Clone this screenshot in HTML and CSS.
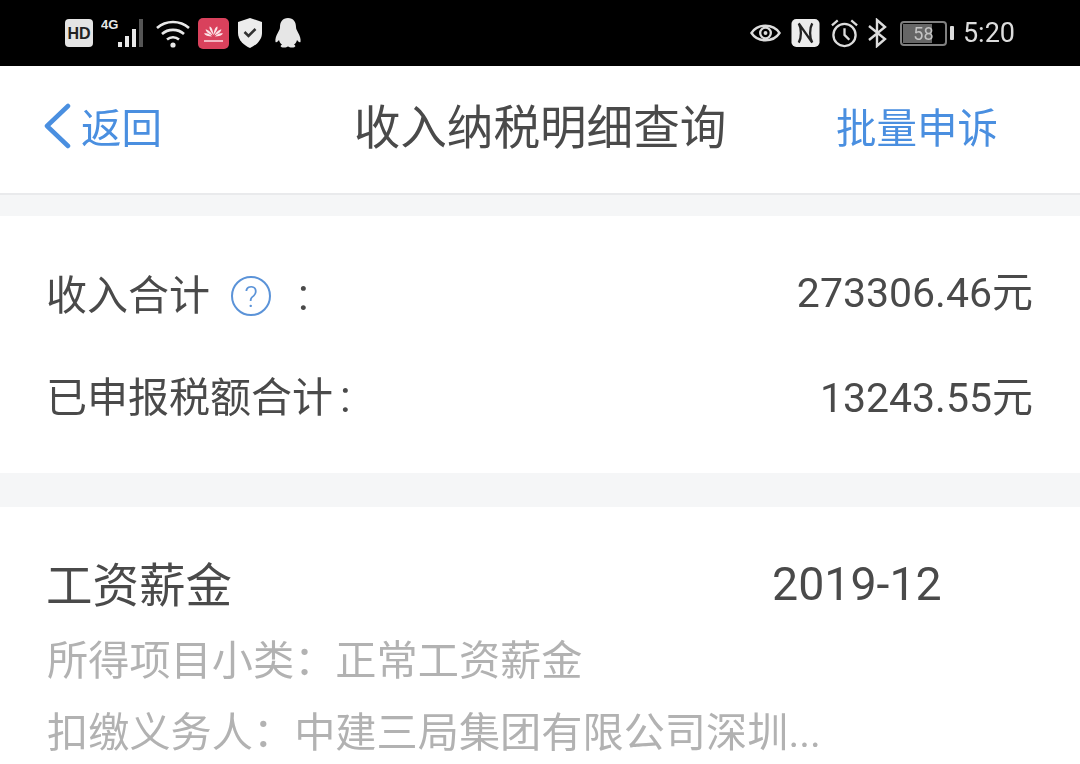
FILE: index.html
```html
<!DOCTYPE html>
<html lang="zh-CN">
<head>
  <meta charset="UTF-8">
  <title>收入纳税明细查询</title>
  <link rel="stylesheet" href="styles.css">
</head>
<body>
  <div class="status-bar">
    <div class="status-left">
      <svg class="ico-hd" width="28" height="28" viewBox="0 0 28 28"><rect width="28" height="28" x="0" y="0" rx="4" fill="#e4e4e4"/><text x="14" y="19.5" class="hd-text">HD</text></svg>
      <svg class="ico-signal" width="48" height="32" viewBox="0 0 48 32">
        <text x="0" y="12" class="g4-text">4G</text>
        <rect x="17" y="25" width="4" height="5" fill="#e8e8e8"/>
        <rect x="24" y="19" width="4" height="11" fill="#e8e8e8"/>
        <rect x="31" y="12" width="4" height="18" fill="#e8e8e8"/>
        <rect x="38" y="2" width="4" height="28" fill="#555"/>
      </svg>
      <svg class="ico-wifi" width="36" height="32" viewBox="0 0 36 32" fill="none" stroke="#e8e8e8" stroke-width="2.6">
        <path d="M2 11C11 3 25 3 34 11"/>
        <path d="M7 17C13 11.5 23 11.5 29 17"/>
        <path d="M12 22.5C15.5 19.5 20.5 19.5 24 22.5"/>
        <circle cx="18" cy="28" r="2.6" fill="#e8e8e8" stroke="none"/>
      </svg>
      <svg class="ico-huawei" width="31" height="31" viewBox="0 0 31 31">
        <rect width="31" height="31" rx="5" fill="#d9415c"/>
        <path d="M15.5 17C13 14 11 11 11.5 8.5C13.5 9 15 12 15.5 17ZM15.5 17C18 14 20 11 19.5 8.5C17.5 9 16 12 15.5 17ZM14.5 17.5C11 16 8 14 7.5 11.5C10 11.5 13 14 14.5 17.5ZM16.5 17.5C20 16 23 14 23.5 11.5C21 11.5 18 14 16.5 17.5ZM14 18.5C10 18.5 7 17.5 6 15.5C9 14.5 12 16 14 18.5ZM17 18.5C21 18.5 24 17.5 25 15.5C22 14.5 19 16 17 18.5Z" fill="#fbe4e8"/>
        <rect x="6" y="22" width="19" height="2" fill="#f3b6c2"/>
      </svg>
      <svg class="ico-shield" width="26" height="32" viewBox="0 0 26 32">
        <path d="M13 1L25 5V16C25 23 19 28.5 13 31C7 28.5 1 23 1 16V5Z" fill="#ececec"/>
        <path d="M7.5 15L11.5 19L18.5 12" fill="none" stroke="#333" stroke-width="2.5"/>
      </svg>
      <svg class="ico-qq" width="28" height="30" viewBox="0 0 28 30">
        <path d="M14 0C8.5 0 6 4 6 9C6 11 5 12.5 4 14.5C2 18 1 21 1.5 24C2.5 25 4 23.5 5 22C5.5 24 6.5 25.5 8 26.5C6 27.5 6 29.5 10 29.5C12 29.5 13 29 14 28.5C15 29 16 29.5 18 29.5C22 29.5 22 27.5 20 26.5C21.5 25.5 22.5 24 23 22C24 23.5 25.5 25 26.5 24C27 21 26 18 24 14.5C23 12.5 22 11 22 9C22 4 19.5 0 14 0Z" fill="#e6e6e6"/>
      </svg>
    </div>
    <div class="status-right">
      <svg class="ico-eye" width="31" height="24" viewBox="0 0 32 24" fill="none" stroke="#dcdcdc" stroke-width="2.4">
        <path d="M1.5 12C8 2 24 2 30.5 12C24 22 8 22 1.5 12Z"/>
        <circle cx="16" cy="12" r="5.5"/>
        <circle cx="16" cy="12" r="2" fill="#dcdcdc" stroke="none"/>
      </svg>
      <svg class="ico-nfc" width="29" height="30" viewBox="0 0 30 30">
        <rect width="29" height="29" x="0.5" y="0.5" rx="5" fill="#ececec"/>
        <path d="M8 5C11 10 11 20 8 25M22 5C19 10 19 20 22 25M8 5L22 25" fill="none" stroke="#222" stroke-width="2.4"/>
      </svg>
      <svg class="ico-alarm" width="29" height="30" viewBox="0 0 30 30" fill="none" stroke="#dcdcdc" stroke-width="2.4">
        <circle cx="15" cy="17" r="11.5"/>
        <path d="M15 10V17L20 22"/>
        <path d="M2 7L8 2M28 7L22 2"/>
      </svg>
      <svg class="ico-bt" width="20" height="30" viewBox="0 0 20 30" fill="none" stroke="#dcdcdc" stroke-width="2.4">
        <path d="M2 8L18 21L10 28V2L18 9L2 22"/>
      </svg>
      <div class="battery">
        <div class="battery-fill"></div>
        <span class="battery-num">58</span>
      </div>
      <div class="battery-tip"></div>
      <span class="clock">5:20</span>
    </div>
  </div>

  <div class="nav-bar">
    <div class="nav-back">
      <svg width="30" height="46" viewBox="0 0 30 46" fill="none" stroke="#4a8fe0" stroke-width="4.5" stroke-linecap="round" stroke-linejoin="round">
        <path d="M25 3L4 23L25 43"/>
      </svg>
      <span>返回</span>
    </div>
    <div class="nav-title">收入纳税明细查询</div>
    <div class="nav-action">批量申诉</div>
  </div>

  <div class="gap gap-top"></div>

  <div class="summary">
    <div class="summary-row">
      <div class="summary-label">
        <span>收入合计</span>
        <span class="help">?</span>
        <span class="colon colon-first">:</span>
      </div>
      <div class="summary-value value-one">273306.46元</div>
    </div>
    <div class="summary-row">
      <div class="summary-label">
        <span>已申报税额合计</span>
        <span class="colon colon-second">:</span>
      </div>
      <div class="summary-value">13243.55元</div>
    </div>
  </div>

  <div class="gap gap-mid"></div>

  <div class="record">
    <div class="record-head">
      <div class="record-title">工资薪金</div>
      <div class="record-date">2019-12</div>
    </div>
    <div class="record-line">所得项目小类&#xFF1A;正常工资薪金</div>
    <div class="record-line">扣缴义务人&#xFF1A;中建三局集团有限公司深圳...</div>
  </div>
</body>
</html>
```

FILE: styles.css
```css
:root {
  --text: #4a4a4a;
  --blue: #4a8fe0;
  --muted: #b2b2b2;
  --gap: #f5f6f7;
}

html, body {
  margin: 0;
  height: 764px;
  overflow: hidden;
}

body {
  font-family: "Roboto", "Noto Sans CJK SC", sans-serif;
  background: #fff;
  color: var(--text);
  filter: blur(0.4px);
}

.status-bar {
  height: 66px;
  background: #000;
  display: flex;
  justify-content: space-between;
  align-items: center;
  padding: 0 65px;
  box-sizing: border-box;
}

.status-left, .status-right {
  display: flex;
  align-items: center;
}

.status-left svg, .status-right svg {
  display: block;
}

.ico-hd {
  margin-right: 8px;
}

.hd-text {
  font-family: "Liberation Sans", sans-serif;
  font-size: 16px;
  font-weight: bold;
  text-anchor: middle;
  fill: #222;
}

.g4-text {
  font-family: "Liberation Sans", sans-serif;
  font-size: 13px;
  font-weight: bold;
  fill: #e8e8e8;
}

.ico-wifi {
  margin-left: 6px;
}

.ico-huawei {
  margin-left: 7px;
}

.ico-shield {
  margin-left: 8px;
}

.ico-qq {
  margin-left: 11px;
}

.status-right {
  color: #dcdcdc;
}

.ico-eye, .ico-nfc {
  margin-right: 10px;
}

.ico-alarm {
  margin-right: 8px;
}

.ico-bt {
  margin-right: 13px;
}

.battery {
  width: 47px;
  height: 25px;
  border: 2px solid #808080;
  border-radius: 4px;
  box-sizing: border-box;
  position: relative;
  display: flex;
  align-items: center;
  justify-content: center;
}

.battery-fill {
  position: absolute;
  left: 1px;
  top: 1px;
  bottom: 1px;
  width: 29px;
  background: #666;
}

.battery-num {
  position: relative;
  font-size: 18px;
  color: #c4c4c4;
}

.battery-tip {
  width: 4px;
  height: 14px;
  margin-left: 3px;
  background: #dcdcdc;
  border-radius: 1px;
}

.clock {
  font-size: 27px;
  margin-left: 9px;
}

.nav-bar {
  height: 119px;
  padding: 0 82px 8px;
  border-bottom: 2px solid #e9eaec;
  display: grid;
  grid-template-columns: 1fr auto 1fr;
  align-items: center;
  font-size: 40.5px;
}

.nav-back {
  display: flex;
  align-items: center;
  gap: 8px;
  margin-left: -39px;
  color: var(--blue);
}

.nav-title {
  font-size: 46.6px;
  margin-bottom: 4px;
}

.nav-action {
  color: var(--blue);
  justify-self: end;
}

.gap {
  background: var(--gap);
}

.gap-top {
  height: 21px;
}

.gap-mid {
  height: 34px;
}

.summary {
  height: 257px;
  padding: 25px 47px 0 46px;
  box-sizing: border-box;
}

.summary-row {
  display: flex;
  justify-content: space-between;
  align-items: center;
  height: 102px;
  font-size: 41px;
}

.summary-label {
  display: flex;
  align-items: center;
}

.help {
  width: 40px;
  height: 40px;
  margin: 8px 0 0 21px;
  border: 2px solid #5b93d8;
  border-radius: 50%;
  box-sizing: border-box;
  display: flex;
  align-items: center;
  justify-content: center;
  font-size: 30px;
  font-weight: 300;
  color: #5b93d8;
}

.colon {
  font-size: 44px;
  margin-top: 6px;
}

.colon-first {
  margin-left: 27px;
}

.colon-second {
  margin-left: 7px;
}

.value-one {
  margin-top: -6px;
}

.record {
  padding: 46px 48px 0 46px;
}

.record-head {
  display: flex;
  align-items: center;
  height: 56px;
  margin-bottom: 16px;
  font-size: 46.5px;
}

.record-title {
  width: 726px;
}

.record-date {
  margin-top: 6px;
}

.record-line {
  font-size: 41.2px;
  line-height: 72px;
  padding-left: 1px;
  color: var(--muted);
  white-space: nowrap;
}
```
